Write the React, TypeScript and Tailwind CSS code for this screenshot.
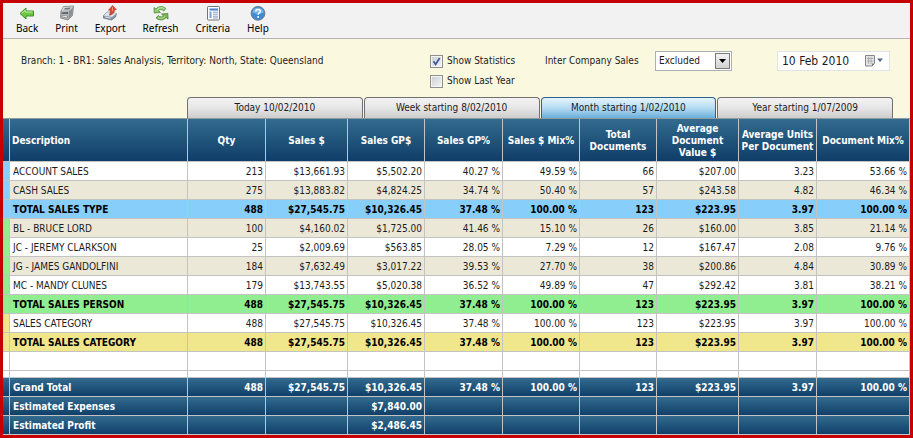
import React from 'react';

const BackIcon = () => (
  <svg viewBox="0 0 16 16" className="h-4 w-4">
    <path d="M1 8.500 7 3v3h7.500v5H7v3z" fill="#6cc644" stroke="#3d8f2c" strokeWidth="1" strokeLinejoin="round" />
    <path d="M3 8.300 6.200 5.200V7H13.500" fill="none" stroke="#c4efa4" strokeWidth="1" />
  </svg>
);

const PrintIcon = () => (
  <svg viewBox="0 0 16 16" className="h-4 w-4">
    <path d="M4.500 1.500 14.500 1 13.500 10.500 9 15 1.500 13 2 6z" fill="#b5b9bb" stroke="#7a7e81" strokeWidth="0.800" strokeLinejoin="round" />
    <path d="M4.500 2 14 1.500 11 5 2.500 5.500z" fill="#d5d8da" />
    <path d="M10 6 14 2.500 13 10 9.500 14z" fill="#8b9093" />
    <path d="M6 3 12 2.500 10 4.500H5z" fill="#6f7477" />
    <path d="M2.500 7.500 9 7V9L2.500 9z" fill="#5c6164" />
    <path d="M3 10.500 8.500 11V13L3 12z" fill="#eef0f1" stroke="#5d6265" strokeWidth="0.500" />
  </svg>
);

const ExportIcon = () => (
  <svg viewBox="0 0 16 16" className="h-4 w-4">
    <path d="M1.500 10.500 5.500 7 14.500 8.500 13.500 12 9.500 15 1.500 13z" fill="#8797a8" stroke="#5d6873" strokeWidth="0.700" strokeLinejoin="round" />
    <path d="M1.500 10.500 5.500 7 14.500 8.500 10 12z" fill="#dce4ec" />
    <path d="M3 12 8.500 13.200" stroke="#e9eef3" strokeWidth="0.900" />
    <path d="M10.500 0.500 14.300 4.500 12.500 4.700C12.500 7.500 11 9.600 7.500 10.200 8.300 8 8.300 6.500 8.200 5.100L6.500 5.200z" fill="#dc4a32" stroke="#a92e20" strokeWidth="0.600" strokeLinejoin="round" />
    <path d="M10.500 2v4" stroke="#f59a7e" strokeWidth="0.900" />
  </svg>
);

const RefreshIcon = () => (
  <svg viewBox="0 0 16 16" className="h-4 w-4" strokeLinejoin="round">
    <path d="M1 2.500 3 4C5.500 1 10 .8 12.800 3.500L10.800 6C8.800 4 6.800 4.200 5.500 5.600L7.500 7.500 1.200 8z" fill="#8fcb68" stroke="#4d8d38" strokeWidth="0.800" />
    <path d="M15 14 13 12.500C10.500 15.500 6 15.600 3.200 13L5.200 10.500C7.200 12.500 9.200 12.300 10.500 10.900L8.500 9 14.800 8.500z" fill="#7bbd55" stroke="#44812f" strokeWidth="0.800" />
    <path d="M3.500 5.200C6 2.300 9 2.200 11.300 3.700" fill="none" stroke="#d3f0b8" strokeWidth="0.900" />
    <path d="M5 12.300C7.500 14 10 13.600 12 11.500" fill="none" stroke="#c1e6a4" strokeWidth="0.900" />
  </svg>
);

const CriteriaIcon = () => (
  <svg viewBox="0 0 16 16" className="h-4 w-4">
    <rect x="2.500" y="1.500" width="12" height="13.500" rx="0.800" fill="#fff" stroke="#70757b" />
    <rect x="4.500" y="3.500" width="8.500" height="2" fill="#4a7fd0" />
    <rect x="4.500" y="6.500" width="2" height="6.500" fill="#7ba2de" />
    <path d="M8 7.200h5M8 9.200h5M8 11.200h5M8 13h5" stroke="#7b93b5" strokeWidth="0.900" />
  </svg>
);

const HelpIcon = () => (
  <svg viewBox="0 0 16 16" className="h-4 w-4">
    <circle cx="8" cy="8.300" r="6.900" fill="#3f8ad2" stroke="#6d7f90" strokeWidth="1" />
    <path d="M2.200 7.500a5.900 5.900 0 0 1 11.600 0c-3 1.600-8 1.600-11.600 0z" fill="#75b2e8" />
    <path d="M5.800 6.500C5.900 3.800 10.300 3.800 10.300 6.300 10.300 8 8.100 8 8.100 9.800" fill="none" stroke="#fff" strokeWidth="1.600" />
    <circle cx="8.100" cy="12" r="1" fill="#fff" />
  </svg>
);

const tools = [
  { label: 'Back', icon: BackIcon },
  { label: 'Print', icon: PrintIcon },
  { label: 'Export', icon: ExportIcon },
  { label: 'Refresh', icon: RefreshIcon },
  { label: 'Criteria', icon: CriteriaIcon },
  { label: 'Help', icon: HelpIcon },
];

const periods = ['Today 10/02/2010', 'Week starting 8/02/2010', 'Month starting 1/02/2010', 'Year starting 1/07/2009'];

const columns = [
  { label: 'Qty', width: 'w-[78px]' },
  { label: 'Sales $', width: 'w-[82px]' },
  { label: 'Sales GP$', width: 'w-[77px]' },
  { label: 'Sales GP%', width: 'w-[78px]' },
  { label: 'Sales $ Mix%', width: 'w-[77px]' },
  { label: 'Total Documents', width: 'w-[77px]' },
  { label: 'Average Document Value $', width: 'w-[82px]' },
  { label: 'Average Units Per Document', width: 'w-[78px]' },
  { label: 'Document Mix%', width: '' },
];

const total = ['488', '$27,545.75', '$10,326.45', '37.48 %', '100.00 %', '123', '$223.95', '3.97', '100.00 %'];

const BLUE = 'bg-[#87cefa]';
const GREEN = 'bg-[#90ee90]';
const YELLOW = 'bg-[#f0e68c]';
const BEIGE = 'bg-[#ebe8d8]';
const NAVY = 'bg-linear-to-b from-[#336b8e] to-[#0e3d68]';

const rows = [
  { name: 'ACCOUNT SALES', mark: BLUE, bg: 'bg-white', values: ['213', '$13,661.93', '$5,502.20', '40.27 %', '49.59 %', '66', '$207.00', '3.23', '53.66 %'] },
  { name: 'CASH SALES', mark: BLUE, bg: BEIGE, values: ['275', '$13,883.82', '$4,824.25', '34.74 %', '50.40 %', '57', '$243.58', '4.82', '46.34 %'] },
  { name: 'TOTAL SALES TYPE', mark: BLUE, bg: BLUE, bold: true, values: total },
  { name: 'BL - BRUCE LORD', mark: GREEN, bg: BEIGE, values: ['100', '$4,160.02', '$1,725.00', '41.46 %', '15.10 %', '26', '$160.00', '3.85', '21.14 %'] },
  { name: 'JC - JEREMY CLARKSON', mark: GREEN, bg: 'bg-white', values: ['25', '$2,009.69', '$563.85', '28.05 %', '7.29 %', '12', '$167.47', '2.08', '9.76 %'] },
  { name: 'JG - JAMES GANDOLFINI', mark: GREEN, bg: BEIGE, values: ['184', '$7,632.49', '$3,017.22', '39.53 %', '27.70 %', '38', '$200.86', '4.84', '30.89 %'] },
  { name: 'MC - MANDY CLUNES', mark: GREEN, bg: 'bg-white', values: ['179', '$13,743.55', '$5,020.38', '36.52 %', '49.89 %', '47', '$292.42', '3.81', '38.21 %'] },
  { name: 'TOTAL SALES PERSON', mark: GREEN, bg: GREEN, bold: true, values: total },
  { name: 'SALES CATEGORY', mark: YELLOW, bg: 'bg-white', values: ['488', '$27,545.75', '$10,326.45', '37.48 %', '100.00 %', '123', '$223.95', '3.97', '100.00 %'] },
  { name: 'TOTAL SALES CATEGORY', mark: YELLOW, bg: YELLOW, bold: true, values: total },
];

const blank = ['', '', '', '', '', '', '', '', ''];

const footer = [
  { name: 'Grand Total', values: total },
  { name: 'Estimated Expenses', values: ['', '', '$7,840.00', '', '', '', '', '', ''] },
  { name: 'Estimated Profit', values: ['', '', '$2,486.45', '', '', '', '', '', ''] },
];

const CELL = 'border-r border-b border-[#c3c3c3] px-0 pt-0.5 pb-0';

const CheckBox = ({ id, label, checked = false }: { id: string; label: string; checked?: boolean }) => (
  <div className="flex h-5 items-center gap-1">
    <span className="relative h-[13px] w-[13px]">
      <input
        type="checkbox"
        id={id}
        defaultChecked={checked}
        className="peer block h-[13px] w-[13px] appearance-none border border-[#8e8f8f] bg-linear-to-br from-[#c9ccd2] to-[#f6f6f6] shadow-[inset_0_0_0_1px_#f4f4f4]"
      />
      <svg viewBox="0 0 13 13" className="pointer-events-none absolute inset-0 hidden h-[13px] w-[13px] peer-checked:block">
        <path d="M3.500 6.300 5.600 9.300 9.700 3" fill="none" stroke="#41609f" strokeWidth="1.800" />
      </svg>
    </span>
    <label htmlFor={id}>{label}</label>
  </div>
);

const App = () => {
  return (
    <div className="border-3 border-[#c60000] bg-[#fbf8e0] font-['DejaVu_Sans_Condensed','DejaVu_Sans',sans-serif] text-[10px] leading-3 text-[#1c1c1c]">
      <nav className="flex h-9 items-start gap-[17px] border-b border-[#b4b4b4] bg-[#f2f2f2] px-[13px] pt-0.5 font-['Noto_Sans',sans-serif]">
        {tools.map(({ label, icon: Icon }) => (
          <button key={label} type="button" className="flex flex-col items-center text-black">
            <Icon />
            <span className="leading-[14px]">{label}</span>
          </button>
        ))}
      </nav>

      <form className="flex h-[58px] items-start pt-3 pl-[18px]">
        <p className="w-[409px] leading-5">Branch: 1 - BR1: Sales Analysis, Territory: North, State: Queensland</p>
        <div className="w-[115px]">
          <CheckBox id="statistics" label="Show Statistics" checked />
          <CheckBox id="last-year" label="Show Last Year" />
        </div>
        <label htmlFor="inter-company" className="w-[110px] leading-5">Inter Company Sales</label>
        <div className="relative mr-[45px] w-[77px]">
          <select id="inter-company" className="block h-5 w-full appearance-none border border-[#a9b0b8] bg-white pl-[3px]">
            <option>Excluded</option>
          </select>
          <span className="pointer-events-none absolute top-0.5 right-0.5 flex h-4 w-[15px] items-center justify-center border border-[#7a7a7a] bg-linear-to-b from-[#f3f3f3] to-[#d2d2d2]">
            <svg viewBox="0 0 7 4" className="h-1 w-[7px]">
              <path d="M0 0h7L3.500 4z" fill="#000" />
            </svg>
          </span>
        </div>
        <div className="flex h-5 w-[113px] items-center border border-[#e0e3ea] bg-white pr-1.5">
          <input
            type="text"
            aria-label="Date"
            defaultValue="10 Feb 2010"
            className="h-4 w-0 grow pl-1 text-xs"
          />
          <button type="button" aria-label="Open calendar">
            <svg viewBox="0 0 18 12" className="h-3 w-[18px]">
              <path d="M.5.5h9v8l-2.500 2.500H.5z" fill="#e4e4e6" stroke="#85858a" />
              <path d="M3.500 2v7M6 2v7M2 3.500h6.500M2 6h6.500" stroke="#a2a2a8" strokeWidth="0.800" />
              <path d="M9.500 8.500H7V11z" fill="#77777d" />
              <path d="M12 3.500h6L15 7z" fill="#4d6690" />
            </svg>
          </button>
        </div>
      </form>

      <div className="mr-[17px] ml-[184px] grid grid-cols-4 gap-px">
        {periods.map((period, i) => (
          <button
            key={period}
            type="button"
            className={
              i === 2
                ? 'h-[21px] rounded-t-sm border border-b-0 border-[#2c628b] bg-linear-to-b from-[#e5f4fc] from-0% via-[#b5dcf2] via-50% to-[#69aedb] to-100%'
                : 'h-[21px] rounded-t-sm border border-b-0 border-[#707070] bg-linear-to-b from-[#f3f3f3] from-0% via-[#e6e6e6] via-50% to-[#cdcdcd] to-100%'
            }
          >
            {period}
          </button>
        ))}
      </div>

      <table className="w-full table-fixed border-separate border-spacing-0 border-t border-[#8d9ba0] bg-white">
        <thead>
          <tr className={`h-[43px] text-white ${NAVY}`}>
            <th className={`w-[7px] ${CELL}`}></th>
            <th className={`w-[178px] text-left ${CELL}`}>
              <span className="pl-0.5">Description</span>
            </th>
            {columns.map((column) => (
              <th key={column.label} className={`${column.width} ${CELL}`}>{column.label}</th>
            ))}
          </tr>
        </thead>
        <tbody>
          {rows.map((row) => (
            <tr key={row.name} className={`h-[19px] ${row.bg} ${row.bold ? 'font-bold text-black' : ''}`}>
              <td className={`${CELL} ${row.mark}`}></td>
              <td className={CELL}>
                <span className="pl-[3px]">{row.name}</span>
              </td>
              {row.values.map((value, i) => (
                <td key={i} className={`text-right ${CELL}`}>
                  <span className="pr-0.5">{value}</span>
                </td>
              ))}
            </tr>
          ))}
          <tr className="h-[19px]">
            <td className={CELL}></td>
            <td className={CELL}></td>
            {blank.map((_, i) => (
              <td key={i} className={CELL}></td>
            ))}
          </tr>
          <tr className="h-[7px]">
            <td className={CELL}></td>
            <td className={CELL}></td>
            {blank.map((_, i) => (
              <td key={i} className={CELL}></td>
            ))}
          </tr>
        </tbody>
        <tfoot className="font-bold text-white">
          {footer.map((row) => (
            <tr key={row.name} className={`h-[19px] ${NAVY}`}>
              <td className={CELL}></td>
              <td className={CELL}>
                <span className="pl-[3px]">{row.name}</span>
              </td>
              {row.values.map((value, i) => (
                <td key={i} className={`text-right ${CELL}`}>
                  <span className="pr-0.5">{value}</span>
                </td>
              ))}
            </tr>
          ))}
        </tfoot>
      </table>
    </div>
  );
};

export default App;
